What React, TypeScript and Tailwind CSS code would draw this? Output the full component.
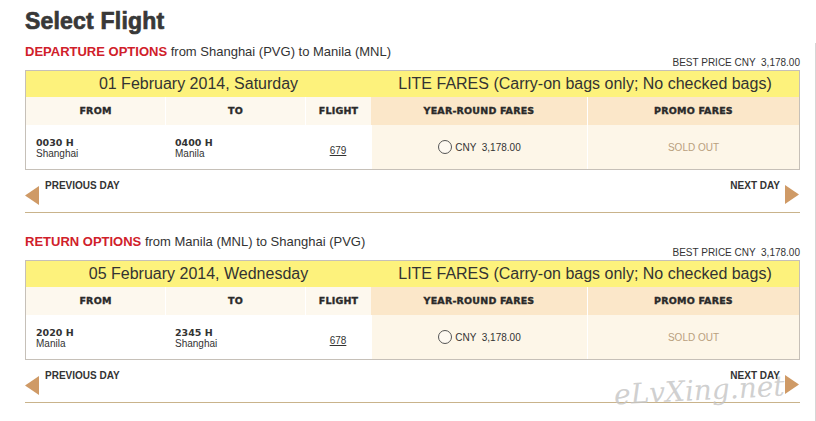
import React from "react";

const BORDER = "border-[#c6c0b8]";

function TriLeft() {
  return (
    <svg width="14" height="19" viewBox="0 0 14 19" className="shrink-0">
      <polygon points="14,0 14,19 0,9.5" fill="#cf9a66" />
    </svg>
  );
}

function TriRight() {
  return (
    <svg width="14" height="19" viewBox="0 0 14 19" className="shrink-0">
      <polygon points="0,0 0,19 14,9.5" fill="#cf9a66" />
    </svg>
  );
}

type SectionProps = {
  label: string;
  route: string;
  date: string;
  fromTime: string;
  fromCity: string;
  toTime: string;
  toCity: string;
  flight: string;
  top: string;
};

function Section({ label, route, date, fromTime, fromCity, toTime, toCity, flight, top }: SectionProps) {
  return (
    <div className={top}>
      <div className="h-[16px] text-[13px] leading-[16px] text-[#333] whitespace-nowrap">
        <span className="text-[#d0202a] font-bold">{label}</span> {route}
      </div>
      <div className="-mt-[3px] h-[13px] text-[10px] leading-[12px] text-[#333] text-right whitespace-pre">
        BEST PRICE CNY  3,178.00
      </div>
      <div className={`border ${BORDER}`}>
        <div className="grid grid-cols-[345px_428px] h-[26px] bg-[#fdf27c] text-[16px] text-[#333] items-center">
          <div className="text-center leading-[26px]">{date}</div>
          <div className="text-center leading-[26px] whitespace-nowrap">LITE FARES (Carry-on bags only; No checked bags)</div>
        </div>
        <div className="grid grid-cols-[139px_140px_66px_216px_212px] h-[28px] font-['DejaVu_Sans',sans-serif] font-bold text-[9.5px] text-[#2a2a2a] tracking-[0.2px] [-webkit-text-stroke:0.35px_#2a2a2a]">
          <div className="bg-[#fdf8ee] flex items-center justify-center">FROM</div>
          <div className="bg-[#fdf8ee] border-l border-white flex items-center justify-center">TO</div>
          <div className="bg-[#fdf8ee] border-l border-white flex items-center justify-center">FLIGHT</div>
          <div className="bg-[#fbe7c9] flex items-center justify-center">YEAR-ROUND FARES</div>
          <div className="bg-[#fbe7c9] border-l border-white flex items-center justify-center">PROMO FARES</div>
        </div>
        <div className="grid grid-cols-[139px_140px_66px_216px_212px] h-[44px] text-[#333]">
          <div className="pl-[10px] pt-[12px]">
            <div className="font-['DejaVu_Sans',sans-serif] font-bold text-[9.5px] leading-[11px]">{fromTime}</div>
            <div className="text-[10px] leading-[11px]">{fromCity}</div>
          </div>
          <div className="pl-[10px] pt-[12px]">
            <div className="font-['DejaVu_Sans',sans-serif] font-bold text-[9.5px] leading-[11px]">{toTime}</div>
            <div className="text-[10px] leading-[11px]">{toCity}</div>
          </div>
          <div className="pt-[12px] text-center">
            <span className="text-[10px] leading-[11px] underline">{flight}</span>
          </div>
          <div className="bg-[#fdf6e8] border-l border-white flex items-center justify-center gap-[3px]">
            <span className="w-[14px] h-[14px] rounded-full border border-[#555] bg-white/40" />
            <span className="text-[10px] whitespace-pre">CNY  3,178.00</span>
          </div>
          <div className="bg-[#fdf6e8] border-l border-white flex items-center justify-center text-[10px] text-[#b9a07e]">
            SOLD OUT
          </div>
        </div>
      </div>
      <div className="h-[43px] border-b border-[#c9b38b] flex justify-between">
        <div className="flex items-start gap-[6px]">
          <div className="mt-[16px]">
            <TriLeft />
          </div>
          <div className="mt-[10px] text-[10px] leading-[12px] font-bold text-[#333]">PREVIOUS DAY</div>
        </div>
        <div className="flex items-start gap-[5px] pr-px">
          <div className="mt-[10px] text-[10px] leading-[12px] font-bold text-[#333]">NEXT DAY</div>
          <div className="mt-[15px]">
            <TriRight />
          </div>
        </div>
      </div>
    </div>
  );
}

export default function App() {
  return (
    <div className="relative w-[816px] h-[421px] bg-white flex overflow-hidden font-['Liberation_Sans',Arial,sans-serif]">
      <div className="w-[815px] pl-[25px] pr-[15px]">
        <div className="pt-[7px] h-[35px]">
          <h1 className="text-[23px] leading-[28px] font-bold text-[#383838] [-webkit-text-stroke:0.7px_#383838] tracking-[0.2px]">
            Select Flight
          </h1>
        </div>
        <Section
          top="mt-[9px]"
          label="DEPARTURE OPTIONS"
          route="from Shanghai (PVG) to Manila (MNL)"
          date="01 February 2014, Saturday"
          fromTime="0030 H"
          fromCity="Shanghai"
          toTime="0400 H"
          toCity="Manila"
          flight="679"
        />
        <Section
          top="mt-[21px]"
          label="RETURN OPTIONS"
          route="from Manila (MNL) to Shanghai (PVG)"
          date="05 February 2014, Wednesday"
          fromTime="2020 H"
          fromCity="Manila"
          toTime="2345 H"
          toCity="Shanghai"
          flight="678"
        />
      </div>
      <div className="w-px mt-[43px] bg-[#d6d6d6]" />
      <div className="absolute left-[614px] top-[374px] -rotate-[3deg] font-['DejaVu_Serif',serif] italic text-[28px] leading-[34px] text-[#c4c4c4]/80 pointer-events-none">
        eLvXing.net
      </div>
    </div>
  );
}
